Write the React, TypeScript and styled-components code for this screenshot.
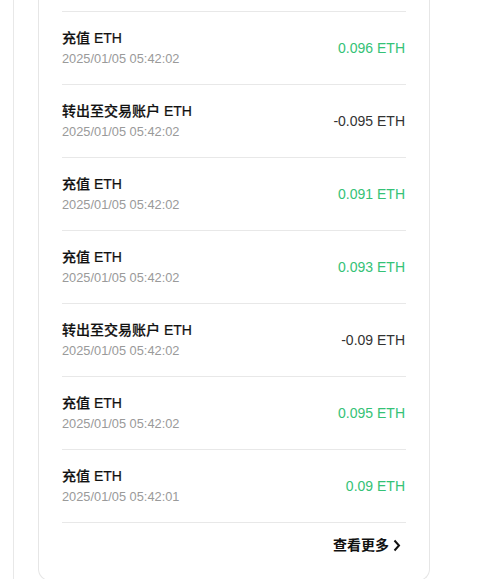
import React from "react";
import styled, { createGlobalStyle } from "styled-components";

const Global = createGlobalStyle`
  html, body { margin: 0; padding: 0; background: #fff; overflow: hidden; }
  body { font-family: "Liberation Sans", Arial, "Noto Sans CJK SC", sans-serif; }
`;

const Outer = styled.div`
  margin-left: 13px;
  border-left: 1px solid #e8e8e8;
  min-height: 600px;
  padding-left: 24px;
`;

const Card = styled.div`
  width: 344px;
  padding: 11px 23px 0;
  border: 1px solid #e6e6e6;
  border-top: none;
  border-radius: 0 0 12px 12px;
  background: #fff;
`;

const Row = styled.div`
  height: 72px;
  border-top: 1px solid #e8e8e8;
  display: flex;
  align-items: center;
  justify-content: space-between;
`;

const Left = styled.div`
  display: flex;
  flex-direction: column;
  gap: 2px;
`;

const Title = styled.div`
  font-size: 14px;
  line-height: 20px;
  font-weight: 500;
  color: #111;
  -webkit-text-stroke: 0.2px #111;
`;

const Time = styled.div`
  font-size: 12.8px;
  line-height: 18px;
  color: #9a9a9a;
`;

const Amount = styled.div<{ $in: boolean }>`
  font-size: 14px;
  line-height: 20px;
  color: ${(p) => (p.$in ? "#35c276" : "#333")};
  padding-right: 1px;
`;

const Footer = styled.div`
  border-top: 1px solid #e8e8e8;
  display: flex;
  justify-content: flex-end;
  padding: 12px 0 25px;
`;

const More = styled.div`
  display: flex;
  align-items: center;
  gap: 4px;
  font-size: 14px;
  line-height: 20px;
  font-weight: 700;
  color: #111;
  margin-right: 5px;
`;

const rows = [
  { t: "充值 ETH", d: "2025/01/05 05:42:02", a: "0.096 ETH", i: true },
  { t: "转出至交易账户 ETH", d: "2025/01/05 05:42:02", a: "-0.095 ETH", i: false },
  { t: "充值 ETH", d: "2025/01/05 05:42:02", a: "0.091 ETH", i: true },
  { t: "充值 ETH", d: "2025/01/05 05:42:02", a: "0.093 ETH", i: true },
  { t: "转出至交易账户 ETH", d: "2025/01/05 05:42:02", a: "-0.09 ETH", i: false },
  { t: "充值 ETH", d: "2025/01/05 05:42:02", a: "0.095 ETH", i: true },
  { t: "充值 ETH", d: "2025/01/05 05:42:01", a: "0.09 ETH", i: true },
];

export default function App() {
  return (
    <>
      <Global />
      <Outer>
        <Card>
          {rows.map((r, k) => (
            <Row key={k}>
              <Left>
                <Title>{r.t}</Title>
                <Time>{r.d}</Time>
              </Left>
              <Amount $in={r.i}>{r.a}</Amount>
            </Row>
          ))}
          <Footer>
            <More>
              查看更多
              <svg width="8" height="13" viewBox="0 0 8 13">
                <path d="M1.5 1.5 L6 6.5 L1.5 11.5" fill="none" stroke="#111" strokeWidth="2" />
              </svg>
            </More>
          </Footer>
        </Card>
      </Outer>
    </>
  );
}
